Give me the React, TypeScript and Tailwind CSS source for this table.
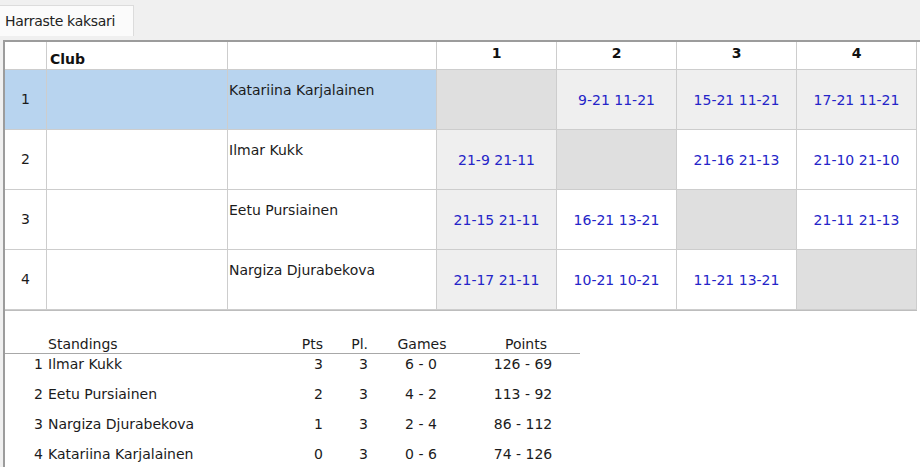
const players = ['Katariina Karjalainen', 'Ilmar Kukk', 'Eetu Pursiainen', 'Nargiza Djurabekova'];

const results: string[][] = [
  ['', '9-21 11-21', '15-21 11-21', '17-21 11-21'],
  ['21-9 21-11', '', '21-16 21-13', '21-10 21-10'],
  ['21-15 21-11', '16-21 13-21', '', '21-11 21-13'],
  ['21-17 21-11', '10-21 10-21', '11-21 13-21', ''],
];

const standings = [
  { pos: 1, name: 'Ilmar Kukk', pts: 3, pl: 3, games: '6 - 0', points: '126 - 69' },
  { pos: 2, name: 'Eetu Pursiainen', pts: 2, pl: 3, games: '4 - 2', points: '113 - 92' },
  { pos: 3, name: 'Nargiza Djurabekova', pts: 1, pl: 3, games: '2 - 4', points: '86 - 112' },
  { pos: 4, name: 'Katariina Karjalainen', pts: 0, pl: 3, games: '0 - 6', points: '74 - 126' },
];

const cols = 'grid-cols-[42px_181px_209px_120px_120px_120px_120px]';
const line = 'border-r border-b border-[#cdcdcd]';
const standCols = 'grid-cols-[38px_240px_40px_45px_106px_98px]';

function scoreBg(row: number, col: number) {
  if (row === col) return 'bg-[#dfdfdf]';
  if (row === 0 || col === 0) return 'bg-[#efefef]';
  return 'bg-white';
}

export default function App() {
  return (
    <div className="w-[920px] h-[467px] overflow-hidden bg-[#f0f0f0] text-[14px] leading-[17px] text-[#1b1b1b] [font-family:'DejaVu_Sans',sans-serif]">
      <div className="h-[40px] pt-[5px]">
        <div className="w-[134px] h-[31px] bg-[#fbfbfb] border-r border-t border-[#dcdcdc] flex items-center pl-[5px] text-[#222] tracking-[-0.3px]">
          Harraste kaksari
        </div>
      </div>

      <div className="h-[427px] bg-white border-t-2 border-l-2 border-[#9c9c9c] ml-[3px]">
        <div className={`grid ${cols} w-[912px] border-b border-[#bdbdbd]`}>
          <div className={`${line} h-[28px]`} />
          <div className={`${line} h-[28px] flex items-end pb-[1px] pl-[3px] font-bold text-[#111]`}>Club</div>
          <div className={`${line} h-[28px]`} />
          {[1, 2, 3, 4].map((n) => (
            <div key={n} className={`${line} h-[28px] flex justify-center pt-[3px] font-bold text-[#111]`}>
              {n}
            </div>
          ))}

          {players.map((p, r) => {
            const sel = r === 0 ? 'bg-[#b8d4ef]' : 'bg-white';
            return [
              <div key={`n${r}`} className={`${line} ${sel} h-[60px] flex items-center pl-[16px]`}>
                {r + 1}
              </div>,
              <div key={`c${r}`} className={`${line} ${sel} h-[60px]`} />,
              <div key={`p${r}`} className={`${line} ${sel} h-[60px] pt-[12px] pl-[1px]`}>
                {p}
              </div>,
              ...results[r].map((s, c) => (
                <div
                  key={`s${r}${c}`}
                  className={`${line} ${scoreBg(r, c)} h-[60px] flex items-center justify-center pt-[2px] text-[#2424c8]`}
                >
                  {s}
                </div>
              )),
            ];
          })}
        </div>

        <div className="pt-[24px]">
          <div className={`grid ${standCols} w-[575px] border-b border-[#a8a8a8] h-[19px] items-end`}>
            <div />
            <div className="pl-[5px]">Standings</div>
            <div className="text-right">Pts</div>
            <div className="text-right">Pl.</div>
            <div className="text-center pl-[2px]">Games</div>
            <div className="text-center pl-[6px]">Points</div>
          </div>
          {standings.map((s) => (
            <div key={s.pos} className={`grid ${standCols} w-[575px] h-[30px] items-start pt-[2px]`}>
              <div className="text-right">{s.pos}</div>
              <div className="pl-[5px]">{s.name}</div>
              <div className="text-right">{s.pts}</div>
              <div className="text-right">{s.pl}</div>
              <div className="text-center">{s.games}</div>
              <div className="text-center">{s.points}</div>
            </div>
          ))}
        </div>
      </div>
    </div>
  );
}
